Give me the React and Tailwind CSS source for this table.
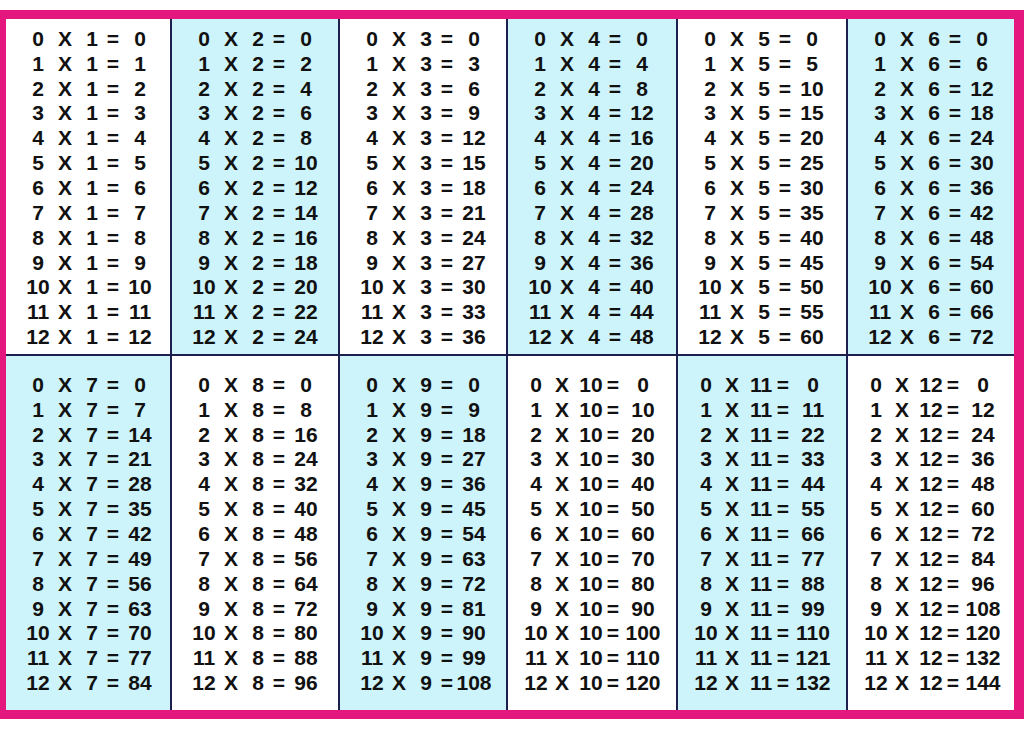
import React from "react";

const tables = [1, 2, 3, 4, 5, 6, 7, 8, 9, 10, 11, 12];
const rows = [0, 1, 2, 3, 4, 5, 6, 7, 8, 9, 10, 11, 12];

const Line = ({ a, b }) => (
  <div
    className={`grid justify-items-center items-center h-[24.85px] ${
      b >= 10
        ? "grid-cols-[24px_28px_30px_14px_46px]"
        : "grid-cols-[28px_26px_28px_14px_40px]"
    }`}
  >
    <span>{a}</span>
    <span>X</span>
    <span>{b}</span>
    <span>=</span>
    <span>{a * b}</span>
  </div>
);

const Table = ({ n, cyan, bottom }) => (
  <div
    className={`${cyan ? "bg-[#cdf4fb]" : "bg-white"} ${n >= 10 ? "pl-[16px]" : "pl-[18px]"} ${
      bottom ? "pt-[16px]" : "pt-[7px]"
    }`}
  >
    {rows.map((a) => (
      <Line key={a} a={a} b={n} />
    ))}
  </div>
);

export default function App() {
  return (
    <div className="w-[1024px] h-[731px] bg-white pt-[10px]">
      <div className="border-[#e3177d] border-l-[6px] border-r-[10px] border-t-[9px] border-b-[9px]">
        <div
          className="grid grid-cols-[164px_166px_166px_168px_168px_166px] grid-rows-[335px_354px] gap-[2px] bg-[#1d1f4f] text-[#111] font-bold text-[21px] leading-none"
          style={{ fontFamily: '"Liberation Sans", Arial, sans-serif' }}
        >
          {tables.map((n, i) => {
            const bottom = i >= 6;
            const col = i % 6;
            const cyan = bottom ? col % 2 === 0 : col % 2 === 1;
            return <Table key={n} n={n} cyan={cyan} bottom={bottom} />;
          })}
        </div>
      </div>
    </div>
  );
}
